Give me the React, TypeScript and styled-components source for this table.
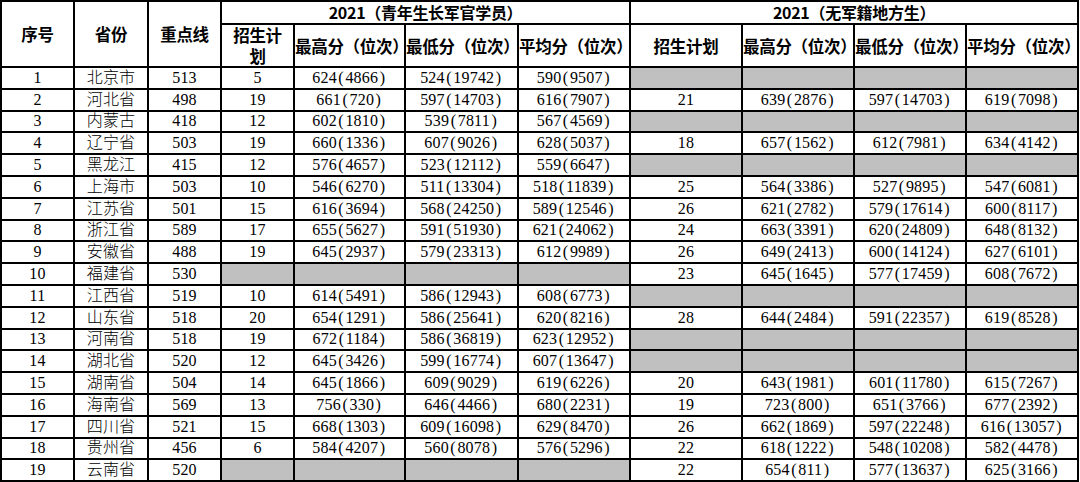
import React from "react";
import styled, { createGlobalStyle } from "styled-components";

const Global = createGlobalStyle`
  html, body { margin: 0; padding: 0; background: #fff; }
  #root { width: 1080px; height: 482px; overflow: hidden; }
`;

const Sheet = styled.table`
  width: 1077px;
  table-layout: fixed;
  border-collapse: collapse;
  color: #000;
`;

const HeadCell = styled.th<{ $h?: number }>`
  border: 2px solid #000;
  padding: 0;
  height: ${(p) => p.$h ?? 41}px;
  font-family: "Noto Sans CJK SC", "Liberation Sans", sans-serif;
  font-weight: 700;
  font-size: 16.5px;
  line-height: 18px;
  text-align: center;
  vertical-align: middle;
  white-space: nowrap;
  letter-spacing: -0.3px;
`;

const GroupCell = styled(HeadCell)`
  font-size: 16px;
  line-height: 17px;
`;

const Stack = styled.span`
  display: flex;
  flex-direction: column;
  align-items: center;
  gap: 2px;
  line-height: 19px;
`;

const Cell = styled.td<{ $gray?: boolean }>`
  border: 2px solid #000;
  padding: 0;
  height: 19.8px;
  background: ${(p) => (p.$gray ? "#c0c0c0" : "#fff")};
  font-family: "Liberation Serif", "Noto Sans CJK SC", serif;
  font-weight: 300;
  font-size: 16px;
  line-height: 16px;
  text-align: center;
  vertical-align: middle;
  white-space: nowrap;
  letter-spacing: 0.2px;
`;

const Paren = styled.span`
  margin: 0 1.5px;
`;

type Score = [number, number];
type Group = { plan: number; hi: Score; lo: Score; avg: Score } | null;
type Row = { name: string; line: number; a: Group; b: Group };

const g = (plan: number, hi: Score, lo: Score, avg: Score): Group => ({ plan, hi, lo, avg });

const rows: Row[] = [
  { name: "北京市", line: 513, a: g(5, [624, 4866], [524, 19742], [590, 9507]), b: null },
  { name: "河北省", line: 498, a: g(19, [661, 720], [597, 14703], [616, 7907]), b: g(21, [639, 2876], [597, 14703], [619, 7098]) },
  { name: "内蒙古", line: 418, a: g(12, [602, 1810], [539, 7811], [567, 4569]), b: null },
  { name: "辽宁省", line: 503, a: g(19, [660, 1336], [607, 9026], [628, 5037]), b: g(18, [657, 1562], [612, 7981], [634, 4142]) },
  { name: "黑龙江", line: 415, a: g(12, [576, 4657], [523, 12112], [559, 6647]), b: null },
  { name: "上海市", line: 503, a: g(10, [546, 6270], [511, 13304], [518, 11839]), b: g(25, [564, 3386], [527, 9895], [547, 6081]) },
  { name: "江苏省", line: 501, a: g(15, [616, 3694], [568, 24250], [589, 12546]), b: g(26, [621, 2782], [579, 17614], [600, 8117]) },
  { name: "浙江省", line: 589, a: g(17, [655, 5627], [591, 51930], [621, 24062]), b: g(24, [663, 3391], [620, 24809], [648, 8132]) },
  { name: "安徽省", line: 488, a: g(19, [645, 2937], [579, 23313], [612, 9989]), b: g(26, [649, 2413], [600, 14124], [627, 6101]) },
  { name: "福建省", line: 530, a: null, b: g(23, [645, 1645], [577, 17459], [608, 7672]) },
  { name: "江西省", line: 519, a: g(10, [614, 5491], [586, 12943], [608, 6773]), b: null },
  { name: "山东省", line: 518, a: g(20, [654, 1291], [586, 25641], [620, 8216]), b: g(28, [644, 2484], [591, 22357], [619, 8528]) },
  { name: "河南省", line: 518, a: g(19, [672, 1184], [586, 36819], [623, 12952]), b: null },
  { name: "湖北省", line: 520, a: g(12, [645, 3426], [599, 16774], [607, 13647]), b: null },
  { name: "湖南省", line: 504, a: g(14, [645, 1866], [609, 9029], [619, 6226]), b: g(20, [643, 1981], [601, 11780], [615, 7267]) },
  { name: "海南省", line: 569, a: g(13, [756, 330], [646, 4466], [680, 2231]), b: g(19, [723, 800], [651, 3766], [677, 2392]) },
  { name: "四川省", line: 521, a: g(15, [668, 1303], [609, 16098], [629, 8470]), b: g(26, [662, 1869], [597, 22248], [616, 13057]) },
  { name: "贵州省", line: 456, a: g(6, [584, 4207], [560, 8078], [576, 5296]), b: g(22, [618, 1222], [548, 10208], [582, 4478]) },
  { name: "云南省", line: 520, a: null, b: g(22, [654, 811], [577, 13637], [625, 3166]) },
];

const widths = [73, 74, 73, 73, 111, 113, 112, 112, 112, 112, 112];

const ScoreText = ({ s }: { s: Score }) => (
  <>
    {s[0]}
    <Paren>(</Paren>
    {s[1]}
    <Paren>)</Paren>
  </>
);

const GroupCells = ({ grp }: { grp: Group }) =>
  grp ? (
    <>
      <Cell>{grp.plan}</Cell>
      <Cell><ScoreText s={grp.hi} /></Cell>
      <Cell><ScoreText s={grp.lo} /></Cell>
      <Cell><ScoreText s={grp.avg} /></Cell>
    </>
  ) : (
    <>
      <Cell $gray />
      <Cell $gray />
      <Cell $gray />
      <Cell $gray />
    </>
  );

export default function App() {
  return (
    <>
      <Global />
      <Sheet>
        <colgroup>
          {widths.map((w, i) => (
            <col key={i} style={{ width: w }} />
          ))}
        </colgroup>
        <thead>
          <tr>
            <HeadCell rowSpan={2} $h={21}>序号</HeadCell>
            <HeadCell rowSpan={2} $h={21}>省份</HeadCell>
            <HeadCell rowSpan={2} $h={21}>重点线</HeadCell>
            <GroupCell colSpan={4} $h={21}>2021（青年生长军官学员）</GroupCell>
            <GroupCell colSpan={4} $h={21}>2021（无军籍地方生）</GroupCell>
          </tr>
          <tr>
            <HeadCell>
              <Stack>
                <span>招生计</span>
                <span>划</span>
              </Stack>
            </HeadCell>
            <HeadCell>最高分（位次）</HeadCell>
            <HeadCell>最低分（位次）</HeadCell>
            <HeadCell>平均分（位次）</HeadCell>
            <HeadCell>招生计划</HeadCell>
            <HeadCell>最高分（位次）</HeadCell>
            <HeadCell>最低分（位次）</HeadCell>
            <HeadCell>平均分（位次）</HeadCell>
          </tr>
        </thead>
        <tbody>
          {rows.map((r, i) => (
            <tr key={r.name}>
              <Cell>{i + 1}</Cell>
              <Cell>{r.name}</Cell>
              <Cell>{r.line}</Cell>
              <GroupCells grp={r.a} />
              <GroupCells grp={r.b} />
            </tr>
          ))}
        </tbody>
      </Sheet>
    </>
  );
}
